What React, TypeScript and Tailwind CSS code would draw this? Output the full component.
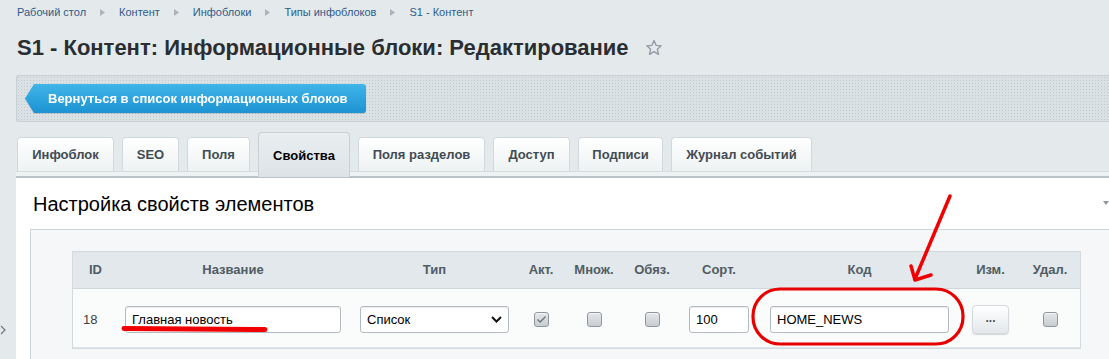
import React from 'react';

const crumbs = ['Рабочий стол', 'Контент', 'Инфоблоки', 'Типы инфоблоков', 'S1 - Контент'];

const tabs = [
  { label: 'Инфоблок', w: 'w-[97px]' },
  { label: 'SEO', w: 'w-[57px]' },
  { label: 'Поля', w: 'w-[63px]' },
  { label: 'Свойства', w: 'w-[92px]', active: true },
  { label: 'Поля разделов', w: 'w-[127px]' },
  { label: 'Доступ', w: 'w-[77px]' },
  { label: 'Подписи', w: 'w-[85px]' },
  { label: 'Журнал событий', w: 'w-[141px]' },
];

const Checkbox: React.FC<{ checked?: boolean }> = ({ checked }) => (
  <div className="w-[15px] h-[15px] rounded-[3px] border border-[#8f979d] bg-gradient-to-b from-[#e4e7ea] to-[#c8cdd1] flex items-center justify-center shadow-[inset_0_1px_0_#f4f5f6]">
    {checked && (
      <svg width="11" height="9" viewBox="0 0 11 9">
        <path d="M1.5 4.5 L4.2 7 L9.5 1.5" fill="none" stroke="#6a7379" strokeWidth="1.3" />
      </svg>
    )}
  </div>
);

const inputCls =
  'h-[27px] bg-white border border-[#b3bbc1] rounded-[3px] shadow-[inset_0_1px_1px_rgba(0,0,0,0.08)] flex items-center px-[6px] text-[13px] text-black';

export default function App() {
  return (
    <div className="relative w-[1109px] h-[359px] overflow-hidden bg-[#e4eaec] font-['Liberation_Sans',Arial,sans-serif]">
      {/* breadcrumbs */}
      <div className="flex items-center h-[16px] mt-[4px] pl-[17px] text-[11px] text-[#2f5b88]">
        {crumbs.map((c, i) => (
          <React.Fragment key={c}>
            {i > 0 && (
              <svg width="5" height="7" viewBox="0 0 5 7" className="mx-[14px]">
                <path d="M0 0 L5 3.5 L0 7 Z" fill="#aab4ba" />
              </svg>
            )}
            <span>{c}</span>
          </React.Fragment>
        ))}
      </div>

      {/* title */}
      <div className="flex items-center h-[28px] mt-[13px] pl-[17px]">
        <h1 className="text-[22px] font-bold text-[#2a2e32]">
          S1 - Контент: Информационные блоки: Редактирование
        </h1>
        <svg width="18" height="17" viewBox="0 0 24 23" className="ml-[16px] mt-[1px]">
          <path
            d="M12 2 L14.8 8.6 L21.8 9.2 L16.5 13.8 L18.1 20.8 L12 17.1 L5.9 20.8 L7.5 13.8 L2.2 9.2 L9.2 8.6 Z"
            fill="none"
            stroke="#8f9aa2"
            strokeWidth="1.8"
            strokeLinejoin="round"
          />
        </svg>
      </div>

      {/* toolbar */}
      <div className="ml-[16px] mt-[14px] h-[47px] rounded-l-[3px] border border-r-0 border-[#c6cfd3] bg-[#dae1e4] bg-[radial-gradient(#c3cbcf_0.8px,transparent_0.9px)] bg-[length:3px_3px] flex items-center pl-[8px]">
        <div className="flex items-center h-[29px] drop-shadow-[0_1px_0_rgba(0,0,0,0.12)]">
          <svg width="11" height="29" viewBox="0 0 11 29">
            <defs>
              <linearGradient id="bt" x1="0" y1="0" x2="0" y2="1">
                <stop offset="0" stopColor="#3fb5e8" />
                <stop offset="1" stopColor="#1c93d3" />
              </linearGradient>
            </defs>
            <path d="M11 0 L9 0 L0 14.5 L9 29 L11 29 Z" fill="url(#bt)" />
          </svg>
          <div className="h-[29px] w-[330px] rounded-r-[3px] bg-gradient-to-b from-[#3fb5e8] to-[#1c93d3] flex items-center pl-[12px] text-[13px] font-bold text-white">
            Вернуться в список информационных блоков
          </div>
        </div>
      </div>

      {/* tabs */}
      <div className="mt-[10px] ml-[17px] flex items-end gap-[8px] h-[39px]">
        {tabs.map((t) =>
          t.active ? (
            <div
              key={t.label}
              className={`${t.w} h-[45px] -mb-[6px] rounded-t-[4px] border border-b-0 border-[#c9d1d5] bg-gradient-to-b from-[#e9eef0] to-[#dde4e7] flex items-start justify-center pt-[13px] text-[13px] font-bold text-black`}
            >
              {t.label}
            </div>
          ) : (
            <div
              key={t.label}
              className={`${t.w} h-[34px] rounded-t-[4px] border border-b-0 border-[#d2d9dc] bg-gradient-to-b from-[#ffffff] to-[#eef2f3] flex items-center justify-center text-[13px] font-bold text-[#414b53]`}
            >
              {t.label}
            </div>
          )
        )}
      </div>
      <div className="ml-[16px] h-[5px] bg-[#eef2f3] border-t border-[#d5dcdf]" />
      <div className="ml-[16px] h-[2px] bg-[#b9c3c8]" />

      {/* panel */}
      <div className="relative ml-[16px] bg-white h-[200px]">
        <div className="h-[51px] flex items-center pl-[17px] text-[20px] text-black">
          Настройка свойств элементов
        </div>
        <svg width="6" height="4" viewBox="0 0 6 4" className="absolute right-0 top-[23px]">
          <path d="M0 0 L6 0 L3 4 Z" fill="#8e979c" />
        </svg>

        <div className="ml-[14px] h-[200px] border-t border-l border-[#cdd5d9] bg-[#f5f7f8] pt-[21px] pl-[41px]">
          <div className="w-[1009px] border border-[#d3dadd] bg-[#fafbfb]">
            {/* header */}
            <div className="flex h-[37px] items-center bg-[#e2e8eb] border-b border-[#cfd7db] text-[13px] font-bold text-[#525c63]">
              <div className="w-[44px] pl-[16px]">ID</div>
              <div className="w-[232px] text-center">Название</div>
              <div className="w-[171px] text-center">Тип</div>
              <div className="w-[42px] text-center">Акт.</div>
              <div className="w-[64px] text-center">Множ.</div>
              <div className="w-[52px] text-center">Обяз.</div>
              <div className="w-[82px] text-center">Сорт.</div>
              <div className="w-[199px] text-center">Код</div>
              <div className="w-[63px] text-center">Изм.</div>
              <div className="w-[56px] text-center">Удал.</div>
            </div>
            {/* row */}
            <div className="flex h-[59px] pt-[3px] items-center border-b border-[#dfe5e8] text-[13px] text-[#3a4248]">
              <div className="w-[44px] pl-[10px]">18</div>
              <div className="w-[232px] flex justify-center">
                <div className={`${inputCls} w-[216px]`}>Главная новость</div>
              </div>
              <div className="w-[171px] flex justify-center">
                <div className={`${inputCls} w-[149px] justify-between pr-[6px]`}>
                  <span>Список</span>
                  <svg width="11" height="7" viewBox="0 0 11 7">
                    <path d="M1 1 L5.5 5.5 L10 1" fill="none" stroke="#111" strokeWidth="2" />
                  </svg>
                </div>
              </div>
              <div className="w-[42px] flex justify-center"><Checkbox checked /></div>
              <div className="w-[64px] flex justify-center"><Checkbox /></div>
              <div className="w-[52px] flex justify-center"><Checkbox /></div>
              <div className="w-[82px] flex justify-center">
                <div className={`${inputCls} w-[60px]`}>100</div>
              </div>
              <div className="w-[199px] flex justify-center">
                <div className={`${inputCls} w-[179px]`}>HOME_NEWS</div>
              </div>
              <div className="w-[63px] flex justify-center">
                <div className="w-[37px] h-[29px] rounded-[4px] border border-[#d3d9dc] bg-gradient-to-b from-[#ffffff] to-[#e3e8ea] shadow-[0_1px_1px_rgba(0,0,0,0.15)] flex items-center justify-center text-[12px] font-bold text-[#4a5259] pb-[3px]">
                  ...
                </div>
              </div>
              <div className="w-[56px] flex justify-center"><Checkbox /></div>
            </div>
          </div>
        </div>
      </div>

      {/* sidebar handle */}
      <svg width="8" height="10" viewBox="0 0 8 10" className="absolute left-0 top-[325px]">
        <path d="M1 1 L5 5 L1 9" fill="none" stroke="#6f7a80" strokeWidth="1.2" />
      </svg>

      {/* red annotations */}
      <svg width="1109" height="359" className="absolute inset-0 pointer-events-none">
        <path d="M124 328.5 L265 329.5" stroke="#f00000" strokeWidth="5" strokeLinecap="round" />
        <rect x="753" y="289" width="210" height="55" rx="27" fill="none" stroke="#e80000" strokeWidth="3.2" />
        <path d="M950 196 L915 279" stroke="#f00000" strokeWidth="3.5" strokeLinecap="round" />
        <path d="M911 266 L915 280 L931 275" fill="none" stroke="#f00000" strokeWidth="3.5" strokeLinecap="round" strokeLinejoin="round" />
      </svg>
    </div>
  );
}
